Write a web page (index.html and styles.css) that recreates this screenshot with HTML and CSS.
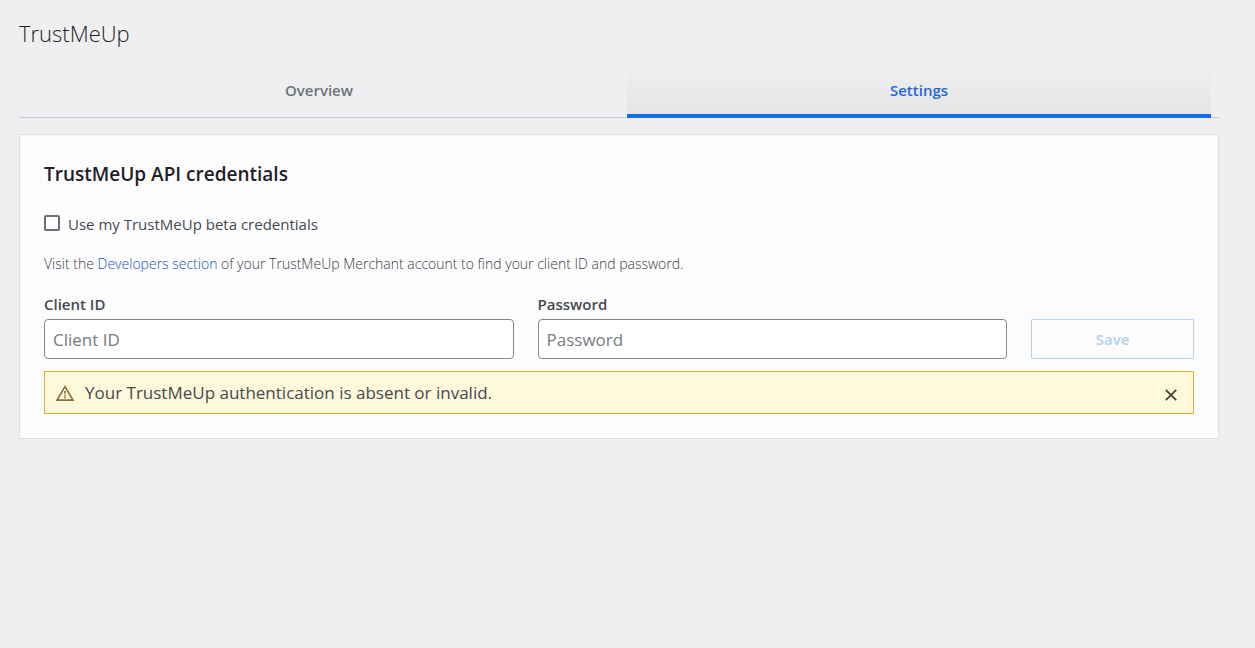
FILE: index.html
```html
<!DOCTYPE html>
<html lang="en">
<head>
<meta charset="utf-8">
<meta name="viewport" content="width=device-width, initial-scale=1">
<title>TrustMeUp</title>
<link rel="stylesheet" href="styles.css">
</head>
<body>
<main class="page">
  <h1 class="page-title">TrustMeUp</h1>
  <nav class="tabs" aria-label="Sections">
    <a class="tab" href="#overview">Overview</a>
    <a class="tab tab-active" href="#settings" aria-current="page">Settings</a>
  </nav>
  <section class="card">
    <h2 class="card-title">TrustMeUp API credentials</h2>
    <label class="check-row" for="beta"><input class="check" type="checkbox" id="beta"><span>Use my TrustMeUp beta credentials</span></label>
    <p class="hint">Visit the <a class="link" href="#developers">Developers section</a> of your TrustMeUp Merchant account to find your client ID and password.</p>
    <form class="fields">
      <div class="field">
        <label class="field-label" for="client">Client ID</label>
        <input class="input" type="text" id="client" placeholder="Client ID">
      </div>
      <div class="field">
        <label class="field-label" for="password">Password</label>
        <input class="input" type="password" id="password" placeholder="Password">
      </div>
      <button class="save" type="submit" disabled>Save</button>
    </form>
    <div class="alert" role="alert">
      <svg class="alert-icon" viewBox="0 0 20 18" aria-hidden="true"><path d="M10 2.6 18 16.1H2Z" fill="none" stroke="currentColor" stroke-width="1.7"/><path d="M10 7v2.6M10 10.5v1.2M10 12.6v1.6" fill="none" stroke="currentColor" stroke-width="1.8"/></svg>
      <span class="alert-text">Your TrustMeUp authentication is absent or invalid.</span>
      <button class="close" type="button" aria-label="Dismiss"><svg class="close-icon" viewBox="0 0 12 12" aria-hidden="true"><path d="M.8.8 11.2 11.2M11.2.8.8 11.2" fill="none" stroke="currentColor" stroke-width="1.8"/></svg></button>
    </div>
  </section>
</main>
</body>
</html>
```

FILE: styles.css
```css
* {
  box-sizing: border-box;
}

body {
  margin: 0;
  background: #efeff1;
  color: #454952;
  font-family: "Open Sans", "Noto Sans", sans-serif;
  font-size: 15px;
  line-height: 20px;
}

.page {
  padding: 16px 36px 24px 19px;
}

.page-title {
  margin: 0;
  color: #1c1f26;
  font-size: 22px;
  font-weight: 350;
  line-height: 34px;
}

.tabs {
  display: flex;
  gap: 16px;
  margin: 14px 0 16px;
  padding: 0 8px;
  border-bottom: 1px solid #c8ccd2;
}

.tab {
  flex: 1;
  margin-bottom: -1px;
  padding: 16px 0 14px;
  border-bottom: 4px solid transparent;
  color: #6b737c;
  font-weight: 600;
  text-align: center;
  text-decoration: none;
}

.tab-active {
  border-bottom-color: #146fe0;
  background: linear-gradient(#efeff1, #e5e5e7);
  color: #2467d2;
}

.card {
  padding: 24px;
  border: 1px solid #dddfe3;
  background: #fcfcfd;
}

.card-title {
  margin: 0 0 24px;
  color: #1f2127;
  font-size: 19px;
  font-weight: 550;
  line-height: 30px;
}

.check-row {
  display: flex;
  align-items: flex-start;
  gap: 8px;
  line-height: 22px;
}

.check {
  appearance: none;
  width: 16px;
  height: 16px;
  margin: 2px 0 0;
  border: 2px solid #687078;
  border-radius: 2px;
  background: #fff;
}

.check:checked {
  background: #146fe0;
}

.hint {
  margin: 19px 0 20px;
  color: #3c4048;
  font-size: 14px;
  font-weight: 350;
}

.link {
  color: #1558ba;
  text-decoration: none;
}

.fields {
  display: grid;
  grid-template-columns: 1fr 1fr 163px;
  gap: 24px;
  align-items: end;
}

.field {
  display: grid;
  gap: 5px;
}

.field-label {
  font-size: 15px;
  font-weight: 600;
}

.input {
  width: 100%;
  height: 40px;
  padding: 0 8px;
  border: 1px solid #85878b;
  border-radius: 4px;
  background: #fff;
  color: #4b4f58;
  font: inherit;
  font-size: 17px;
}

.input::placeholder {
  color: #777a82;
}

.save {
  height: 40px;
  border: 1px solid #b4d1f0;
  border-radius: 1px;
  background: transparent;
  color: #b2d0f3;
  font: inherit;
  font-weight: 600;
}

.alert {
  display: flex;
  align-items: center;
  gap: 10px;
  margin-top: 12px;
  padding: 8px 14px 8px 10px;
  border: 1px solid #d4b32f;
  background: #fff9db;
}

.alert-icon {
  width: 20px;
  height: 18px;
  color: #8a7038;
}

.alert-text {
  flex: 1;
  font-size: 17px;
  font-weight: 380;
  line-height: 25px;
}

.close {
  display: flex;
  padding: 6px 2px 2px;
  border: 0;
  background: none;
  color: #41433f;
}

.close-icon {
  width: 12px;
  height: 12px;
}
```
